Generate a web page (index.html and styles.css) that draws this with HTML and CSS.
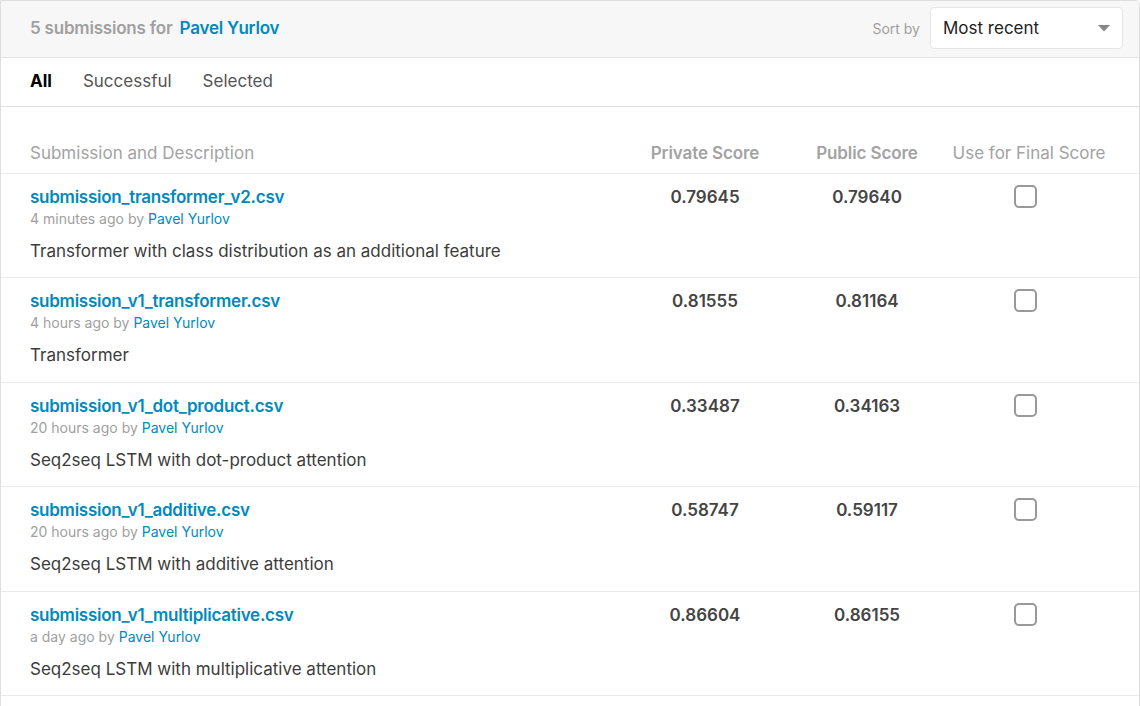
FILE: index.html
```html
<!DOCTYPE html>
<html>
<head>
<meta charset="utf-8">
<link rel="stylesheet" href="styles.css">
</head>
<body>
<div class="panel">
  <div class="topbar">
    <div class="count">5 submissions for <a class="user">Pavel Yurlov</a></div>
    <div class="sort">
      <span class="sort-label">Sort by</span>
      <div class="select">
        <span>Most recent</span>
        <svg class="caret" width="12" height="7" viewBox="0 0 12 7"><path d="M0 0 H12 L6 6.5 Z" fill="#888"/></svg>
      </div>
    </div>
  </div>
  <div class="tabs">
    <span class="tab active">All</span>
    <span class="tab">Successful</span>
    <span class="tab">Selected</span>
  </div>
  <div class="table">
    <div class="thead">
      <div class="th left">Submission and Description</div>
      <div class="th bold">Private Score</div>
      <div class="th bold">Public Score</div>
      <div class="th">Use for Final Score</div>
    </div>
    <div class="row">
      <div class="desc">
        <a class="file">submission_transformer_v2.csv</a>
        <div class="meta">4 minutes ago by <a class="by">Pavel Yurlov</a></div>
        <div class="text">Transformer with class distribution as an additional feature</div>
      </div>
      <div class="score">0.79645</div>
      <div class="score">0.79640</div>
      <div class="check"><span class="box"></span></div>
    </div>
    <div class="row">
      <div class="desc">
        <a class="file">submission_v1_transformer.csv</a>
        <div class="meta">4 hours ago by <a class="by">Pavel Yurlov</a></div>
        <div class="text">Transformer</div>
      </div>
      <div class="score">0.81555</div>
      <div class="score">0.81164</div>
      <div class="check"><span class="box"></span></div>
    </div>
    <div class="row">
      <div class="desc">
        <a class="file">submission_v1_dot_product.csv</a>
        <div class="meta">20 hours ago by <a class="by">Pavel Yurlov</a></div>
        <div class="text">Seq2seq LSTM with dot-product attention</div>
      </div>
      <div class="score">0.33487</div>
      <div class="score">0.34163</div>
      <div class="check"><span class="box"></span></div>
    </div>
    <div class="row">
      <div class="desc">
        <a class="file">submission_v1_additive.csv</a>
        <div class="meta">20 hours ago by <a class="by">Pavel Yurlov</a></div>
        <div class="text">Seq2seq LSTM with additive attention</div>
      </div>
      <div class="score">0.58747</div>
      <div class="score">0.59117</div>
      <div class="check"><span class="box"></span></div>
    </div>
    <div class="row">
      <div class="desc">
        <a class="file">submission_v1_multiplicative.csv</a>
        <div class="meta">a day ago by <a class="by">Pavel Yurlov</a></div>
        <div class="text">Seq2seq LSTM with multiplicative attention</div>
      </div>
      <div class="score">0.86604</div>
      <div class="score">0.86155</div>
      <div class="check"><span class="box"></span></div>
    </div>
  </div>
</div>
</body>
</html>
```
FILE: styles.css
```css
* { box-sizing: border-box; }
html, body { margin: 0; padding: 0; background: #fff; }
body {
  font-family: Inter, "Liberation Sans", sans-serif;
  color: #3c3c3c;
  overflow: hidden;
}
.panel {
  width: 1140px;
  height: 800px;
  border: 1px solid #dedede;
  border-radius: 0 4px 0 0;
  overflow: hidden;
}
.topbar {
  height: 57px;
  background: #f7f7f7;
  border-bottom: 1px solid #e3e3e3;
  display: flex;
  align-items: center;
  justify-content: space-between;
  padding: 0 16px 2px 29px;
}
.count {
  font-size: 17px;
  font-weight: 600;
  letter-spacing: -0.2px;
  color: #a0a0a0;
}
.user { color: #008abc; margin-left: 3px; }
.sort { display: flex; align-items: center; gap: 10px; }
.sort-label { font-size: 14px; color: #a0a0a0; }
.select {
  width: 193px;
  height: 42px;
  background: #fff;
  border: 1px solid #e6e6e6;
  border-radius: 4px;
  display: flex;
  align-items: center;
  justify-content: space-between;
  padding: 0 12px 0 12px;
  font-size: 17px;
  color: #222;
}
.tabs {
  height: 49px;
  border-bottom: 1px solid #e0e0e0;
  display: flex;
  align-items: center;
  gap: 31px;
  padding: 0 29px 2px;
}
.tab { font-size: 17px; color: #555; }
.tab.active { color: #000; font-weight: 700; }
.table { padding: 0 29px; }
.thead, .row {
  display: grid;
  grid-template-columns: 1fr 162px 162px 162px;
}
.thead {
  padding-top: 35px;
  padding-bottom: 8px;
  border-bottom: 1px solid #ebebeb;
  margin: 0 -29px;
  padding-left: 29px;
  padding-right: 29px;
}
.th {
  font-size: 17px;
  line-height: 23px;
  color: #a3a3a3;
  text-align: center;
}
.th.left { text-align: left; }
.th.bold { font-weight: 600; letter-spacing: -0.1px; }
.row {
  margin: 0 -29px;
  padding: 12px 29px 14px;
  border-bottom: 1px solid #ebebeb;
  height: 104.4px;
}
.desc { display: flex; flex-direction: column; }
.file {
  font-size: 17px;
  line-height: 22px;
  font-weight: 600;
  letter-spacing: -0.25px;
  color: #008abc;
}
.meta {
  font-size: 14px;
  line-height: 22px;
  color: #a0a0a0;
}
.by { color: #008abc; }
.text {
  font-size: 17px;
  line-height: 24px;
  margin-top: 9px;
  color: #3c3c3c;
}
.score {
  font-size: 17px;
  line-height: 22px;
  font-weight: 600;
  color: #444;
  text-align: center;
}
.check { display: flex; justify-content: center; margin-top: -1px; }
.box {
  display: block;
  width: 23px;
  height: 23px;
  border: 2px solid #999;
  border-radius: 5px;
  margin-left: -8px;
}
```
